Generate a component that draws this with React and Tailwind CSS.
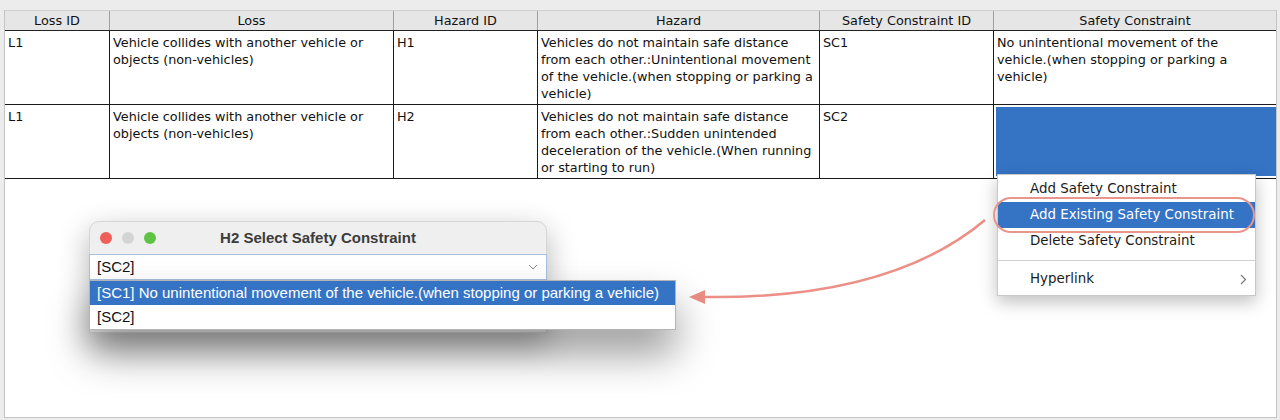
import React from 'react';

const cols = 'grid grid-cols-[105px_284px_144px_282px_174px_282px]';

const rows = [
  {
    lossId: 'L1',
    loss: 'Vehicle collides with another vehicle or objects (non-vehicles)',
    hazardId: 'H1',
    hazard: 'Vehicles do not maintain safe distance from each other.:Unintentional movement of the vehicle.\u2060(when stopping or parking a vehicle)',
    scId: 'SC1',
    sc: 'No unintentional movement of the vehicle.\u2060(when stopping or parking a vehicle)',
  },
  {
    lossId: 'L1',
    loss: 'Vehicle collides with another vehicle or objects (non-vehicles)',
    hazardId: 'H2',
    hazard: 'Vehicles do not maintain safe distance from each other.:Sudden unintended deceleration of the vehicle.\u2060(When running or starting to run)',
    scId: 'SC2',
    sc: '',
    selected: true,
  },
];

const headers = ['Loss ID', 'Loss', 'Hazard ID', 'Hazard', 'Safety Constraint ID', 'Safety Constraint'];

const Cell = ({ children, last }) => (
  <div className={`h-[73px] px-[3px] pt-[3px] leading-[17px] ${last ? '' : 'border-r border-[#1a1a1a]'}`}>
    {children}
  </div>
);

const ContextMenu = () => (
  <div className="absolute left-[997px] top-[174px] w-[259px] bg-white border border-[#c8c8c8] shadow-[0_6px_16px_rgba(0,0,0,0.25)] pt-px pb-[3px] text-[13.4px] text-[#1b1b1b] font-['DejaVu_Sans',sans-serif]">
    <div className="h-[26px] flex items-center pl-[32px]">Add Safety Constraint</div>
    <div className="relative h-[26px] flex items-center pl-[32px] bg-[#3574c5] text-white">
      Add Existing Safety Constraint
    </div>
    <div className="h-[26px] flex items-center pl-[32px]">Delete Safety Constraint</div>
    <div className="h-[12px] flex items-center">
      <div className="w-full border-t border-[#d2d2d2]" />
    </div>
    <div className="h-[26px] flex items-center justify-between pl-[32px] pr-[8px]">
      <span>Hyperlink</span>
      <svg width="7" height="11" viewBox="0 0 7 11" fill="none">
        <path d="M1 1l4.5 4.5L1 10" stroke="#7a7a7a" strokeWidth="1.2" />
      </svg>
    </div>
    <div className="absolute left-[-5px] top-[22px] w-[262px] h-[36px] rounded-full border-2 border-[#ea958c]" />
  </div>
);

const Dialog = () => (
  <div className="absolute left-[89px] top-[221px] font-['Liberation_Sans',Arial,sans-serif]">
    <div className="w-[458px] rounded-t-[10px] bg-[#efefef] border border-[#d6d6d6] shadow-[0_10px_30px_rgba(0,0,0,0.3)]">
      <div className="h-[32px] flex items-center relative">
        <div className="flex gap-[10px] pl-[10px]">
          <span className="w-[12px] h-[12px] rounded-full bg-[#ee5f57]" />
          <span className="w-[12px] h-[12px] rounded-full bg-[#d4d4d4]" />
          <span className="w-[12px] h-[12px] rounded-full bg-[#5fc344]" />
        </div>
        <div className="absolute inset-0 flex items-center justify-center font-bold text-[15px] text-[#3c3c3c]">
          H2 Select Safety Constraint
        </div>
      </div>
      <div className="h-[26px] mx-[-1px] bg-white border border-[#a9bfdc] flex items-center justify-between pl-[7px] pr-[8px] text-[15px] text-[#111]">
        <span>[SC2]</span>
        <svg width="10" height="6" viewBox="0 0 10 6" fill="none">
          <path d="M1 1l4 4 4-4" stroke="#8a8a8a" strokeWidth="1" />
        </svg>
      </div>
      <div className="h-[52px]" />
    </div>
    <div className="absolute left-0 top-[59px] w-[587px] bg-white border border-[#b4b4b4] shadow-[0_24px_40px_rgba(0,0,0,0.4)] text-[15px]">
      <div className="h-[24px] flex items-center pl-[7px] bg-[#3574c5] text-white">
        [SC1] No unintentional movement of the vehicle.(when stopping or parking a vehicle)
      </div>
      <div className="h-[24px] flex items-center pl-[7px] text-[#111]">[SC2]</div>
    </div>
  </div>
);

const Arrow = () => (
  <svg className="absolute left-0 top-0 pointer-events-none" width="1280" height="420">
    <path d="M985 220 Q 890 300 702 297" stroke="#ec8f86" strokeWidth="2.5" fill="none" />
    <polygon points="689,297 705,290 705,304" fill="#ec8f86" />
  </svg>
);

export default function App() {
  return (
    <div className="relative w-[1280px] h-[420px] bg-[#ececec] overflow-hidden font-['DejaVu_Sans',sans-serif] text-[12.8px] text-[#111]">
      <div className="absolute left-[4px] top-[10px] w-[1273px] h-[408px] bg-white border-l border-r border-b border-[#c4c4c4]">
        <div className={`${cols} h-[21px] bg-[#e6e6e6] border-t border-[#cfcfcf] border-b border-b-[#222]`}>
          {headers.map((h, i) => (
            <div
              key={h}
              className={`flex items-center justify-center ${i < headers.length - 1 ? 'border-r border-[#a0a0a0]' : ''}`}
            >
              {h}
            </div>
          ))}
        </div>
        {rows.map((r, i) => (
          <div key={i} className={`${cols} border-b border-[#1a1a1a]`}>
            <Cell>{r.lossId}</Cell>
            <Cell>{r.loss}</Cell>
            <Cell>{r.hazardId}</Cell>
            <Cell>{r.hazard}</Cell>
            <Cell>{r.scId}</Cell>
            {r.selected ? (
              <div className="h-[73px] p-[2px] pr-0">
                <div className="h-full bg-[#3574c5]" />
              </div>
            ) : (
              <Cell last>{r.sc}</Cell>
            )}
          </div>
        ))}
      </div>
      <Arrow />
      <Dialog />
      <ContextMenu />
    </div>
  );
}
